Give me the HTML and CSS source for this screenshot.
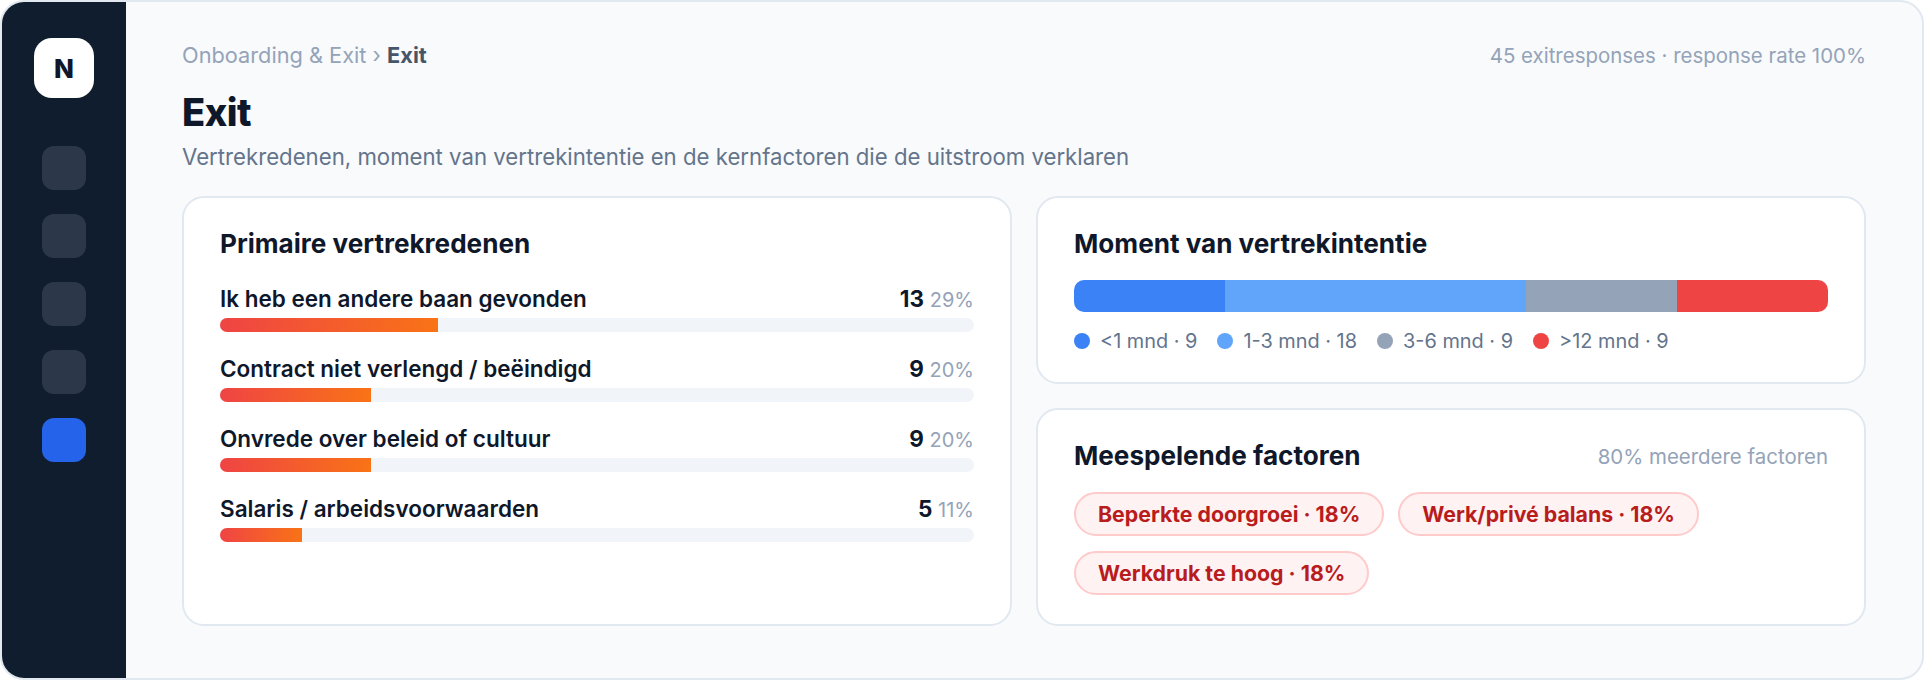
FILE: index.html
```html
<!DOCTYPE html>
<html lang="nl">
<head>
    <meta charset="UTF-8">
    <meta name="viewport" content="width=device-width, initial-scale=1.0">
    <title>Exit</title>
    <link rel="stylesheet" href="styles.css">
</head>
<body>
    <div class="frame">
        <aside class="sidebar">
            <div class="logo">N</div>
            <div class="nav">
                <div class="nav-item"></div>
                <div class="nav-item"></div>
                <div class="nav-item"></div>
                <div class="nav-item"></div>
                <div class="nav-item active"></div>
            </div>
        </aside>
        <main class="main">
            <div class="topbar">
                <div class="crumbs">Onboarding &amp; Exit › <b>Exit</b></div>
                <div class="meta">45 exitresponses · response rate 100%</div>
            </div>
            <h1>Exit</h1>
            <p class="sub">Vertrekredenen, moment van vertrekintentie en de kernfactoren die de uitstroom verklaren</p>
            <div class="grid">
                <section class="card">
                    <h2>Primaire vertrekredenen</h2>
                    <div class="reasons">
                        <div class="reason">
                            <div class="reason-head">
                                <span class="reason-name">Ik heb een andere baan gevonden</span>
                                <span class="reason-val"><b>13</b> <span>29%</span></span>
                            </div>
                            <div class="track"><div class="fill" style="width: 28.9%"></div></div>
                        </div>
                        <div class="reason">
                            <div class="reason-head">
                                <span class="reason-name">Contract niet verlengd / beëindigd</span>
                                <span class="reason-val"><b>9</b> <span>20%</span></span>
                            </div>
                            <div class="track"><div class="fill" style="width: 20%"></div></div>
                        </div>
                        <div class="reason">
                            <div class="reason-head">
                                <span class="reason-name">Onvrede over beleid of cultuur</span>
                                <span class="reason-val"><b>9</b> <span>20%</span></span>
                            </div>
                            <div class="track"><div class="fill" style="width: 20%"></div></div>
                        </div>
                        <div class="reason">
                            <div class="reason-head">
                                <span class="reason-name">Salaris / arbeidsvoorwaarden</span>
                                <span class="reason-val"><b>5</b> <span>11%</span></span>
                            </div>
                            <div class="track"><div class="fill" style="width: 10.9%"></div></div>
                        </div>
                    </div>
                </section>
                <div class="column">
                    <section class="card card-moment">
                        <h2>Moment van vertrekintentie</h2>
                        <div class="stack">
                            <div class="seg seg-1" style="width: 20%"></div>
                            <div class="seg seg-2" style="width: 40%"></div>
                            <div class="seg seg-3" style="width: 20%"></div>
                            <div class="seg seg-4" style="width: 20%"></div>
                        </div>
                        <div class="legend">
                            <span class="legend-item"><i class="dot seg-1"></i>&lt;1 mnd · 9</span>
                            <span class="legend-item"><i class="dot seg-2"></i>1-3 mnd · 18</span>
                            <span class="legend-item"><i class="dot seg-3"></i>3-6 mnd · 9</span>
                            <span class="legend-item"><i class="dot seg-4"></i>&gt;12 mnd · 9</span>
                        </div>
                    </section>
                    <section class="card card-factors">
                        <div class="card-head">
                            <h2>Meespelende factoren</h2>
                            <span class="meta">80% meerdere factoren</span>
                        </div>
                        <div class="pills">
                            <span class="pill">Beperkte doorgroei · 18%</span>
                            <span class="pill">Werk/privé balans · 18%</span>
                            <span class="pill">Werkdruk te hoog · 18%</span>
                        </div>
                    </section>
                </div>
            </div>
        </main>
    </div>
</body>
</html>
```

FILE: styles.css
```css
* {
    box-sizing: border-box;
}

body {
    margin: 0;
    background-color: #ffffff;
    font-family: Inter, "Liberation Sans", sans-serif;
    color: #0f172a;
}

.frame {
    display: flex;
    width: 1924px;
    height: 680px;
    background-color: #f8fafc;
    border: 2px solid #e2e8f0;
    border-radius: 24px;
    overflow: hidden;
}

.sidebar {
    flex: 0 0 124px;
    display: flex;
    flex-direction: column;
    align-items: center;
    padding-top: 36px;
    background-color: #0f1d2f;
}

.logo {
    display: flex;
    align-items: center;
    justify-content: center;
    width: 60px;
    height: 60px;
    background-color: #ffffff;
    border-radius: 18px;
    font-size: 26px;
    font-weight: 800;
    color: #0f172a;
}

.nav {
    display: flex;
    flex-direction: column;
    gap: 24px;
    margin-top: 48px;
}

.nav-item {
    width: 44px;
    height: 44px;
    background-color: #2c3849;
    border-radius: 12px;
}

.nav-item.active {
    background-color: #2563eb;
}

.main {
    flex: 1;
    min-width: 0;
    padding: 40px 56px 0;
}

.topbar {
    display: flex;
    justify-content: space-between;
    align-items: center;
    height: 26px;
}

.crumbs {
    font-size: 21.75px;
    color: #94a3b8;
}

.crumbs b {
    font-weight: 700;
    color: #475569;
}

.meta {
    font-size: 20.45px;
    color: #94a3b8;
}

h1 {
    margin: 21px 0 0;
    font-size: 38px;
    line-height: 46px;
    font-weight: 800;
    letter-spacing: -0.5px;
}

.sub {
    margin: 9px 0 0;
    font-size: 22.2px;
    line-height: 26px;
    color: #64748b;
}

.grid {
    display: grid;
    grid-template-columns: 1fr 1fr;
    gap: 24px;
    margin-top: 26px;
    height: 430px;
}

.column {
    display: flex;
    flex-direction: column;
    gap: 24px;
}

.card {
    background-color: #ffffff;
    border: 2px solid #e2e8f0;
    border-radius: 22px;
    padding: 29px 36px;
}

.card-moment {
    height: 188px;
}

.card-factors {
    flex: 1;
}

h2 {
    margin: 0;
    font-size: 26.1px;
    line-height: 34px;
    font-weight: 700;
}

.reasons {
    display: flex;
    flex-direction: column;
    gap: 18px;
    margin-top: 19px;
}

.reason-head {
    display: flex;
    justify-content: space-between;
    align-items: center;
    height: 38px;
    padding-bottom: 2px;
    font-size: 22.5px;
    font-weight: 600;
}

.reason-val b {
    font-weight: 700;
}

.reason-val span {
    font-weight: 400;
    font-size: 20px;
    color: #94a3b8;
}

.track {
    height: 14px;
    background-color: #f1f5f9;
    border-radius: 7px;
    overflow: hidden;
}

.fill {
    height: 100%;
    background: linear-gradient(90deg, #ef4444, #f97316);
}

.stack {
    display: flex;
    height: 32px;
    margin-top: 19px;
    border-radius: 10px;
    overflow: hidden;
}

.seg-1 {
    background-color: #3b82f6;
}

.seg-2 {
    background-color: #60a5fa;
}

.seg-3 {
    background-color: #94a3b8;
}

.seg-4 {
    background-color: #ef4444;
}

.legend {
    display: flex;
    gap: 20px;
    margin-top: 17px;
    font-size: 19.9px;
    line-height: 24px;
    color: #64748b;
}

.legend-item {
    display: flex;
    align-items: center;
    gap: 10px;
}

.dot {
    width: 16px;
    height: 16px;
    border-radius: 50%;
}

.card-head {
    display: flex;
    justify-content: space-between;
    align-items: center;
}

.pills {
    display: flex;
    flex-wrap: wrap;
    gap: 15px 14px;
    margin-top: 19px;
}

.pill {
    display: flex;
    align-items: center;
    height: 44px;
    padding: 0 22px;
    background-color: #fef2f2;
    border: 2px solid #fecaca;
    border-radius: 22px;
    font-size: 21.3px;
    font-weight: 700;
    color: #b91c1c;
}
```
